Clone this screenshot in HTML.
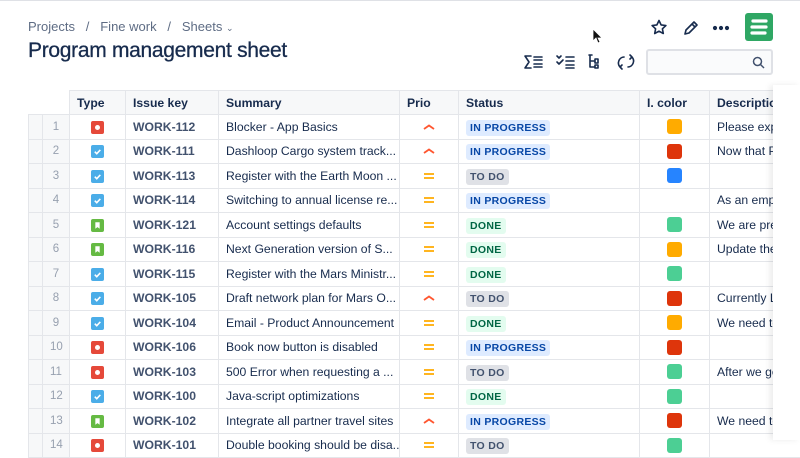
<!DOCTYPE html>
<html><head><meta charset="utf-8"><style>
*{box-sizing:border-box;margin:0;padding:0}
body{width:800px;height:440px;overflow:hidden;background:#fff;font-family:"Liberation Sans",sans-serif;color:#172b4d;position:relative}
.topline{position:absolute;left:0;top:0;width:800px;height:1px;background:#dfe1e6}
.bc{position:absolute;left:28px;top:19px;font-size:13px;color:#5e6c84}
.h1{position:absolute;left:28px;top:39px;font-size:21px;font-weight:400;color:#172b4d;letter-spacing:-0.3px;-webkit-text-stroke:0.3px #172b4d}
.tbl{position:absolute;left:28px;top:90px;border-collapse:collapse;font-size:12.2px;table-layout:fixed;width:781px}
.tbl td,.tbl th{border:1px solid #e4e6ea;height:24.5px;white-space:nowrap;overflow:hidden;padding:0 7px;text-align:left}
.tbl th{font-weight:bold;background:#f7f8f9;height:24px}
.tbl th.blank{border:none;background:#fff}
.n{color:#97a0af;text-align:center!important;font-size:11.5px}
.g{background:#f7f8f9}
.k{color:#42526e;font-weight:bold}
.c{text-align:center!important}
.ic{display:inline-block;width:13px;height:13px;border-radius:2px;vertical-align:middle;position:relative}
.ic svg{position:absolute;left:0;top:0}
.bug{background:#e5493a}.bug:after{content:"";position:absolute;left:4px;top:4px;width:5px;height:5px;border-radius:50%;background:#fff}
.task{background:#4bade8}
.story{background:#65ba43}
.lz{font-size:10.5px;font-weight:bold;padding:2px 4px;border-radius:3px;letter-spacing:.3px}
.ip{background:#deebff;color:#0747a6}.td{background:#dfe1e6;color:#42526e}.dn{background:#e3fcef;color:#006644}
.sw{display:inline-block;width:15px;height:15px;border-radius:3px;vertical-align:middle}
.shade{position:absolute;left:773px;top:85px;width:27px;height:355px;background:#fff;box-shadow:-3px 0 6px rgba(0,0,0,.08)}
.search{position:absolute;left:646px;top:49px;width:127px;height:26px;border:2px solid #dfe1e6;border-radius:3px;background:#fafbfc}
.logo{position:absolute;left:745px;top:13px;width:28px;height:28px;background:#2fa764;border-radius:3px}
</style></head><body>
<div class="topline"></div>
<div class="bc">Projects &nbsp;&nbsp;/&nbsp;&nbsp; Fine work &nbsp;&nbsp;/&nbsp;&nbsp; Sheets <span style="font-size:9px">&#8964;</span></div>
<div class="h1">Program management sheet</div>

<svg style="position:absolute;left:648px;top:18px" width="90" height="20" viewBox="0 0 90 20" fill="none" stroke="#172b4d" stroke-width="1.6" stroke-linejoin="round" stroke-linecap="round">
<path d="M11 2.5l2.1 4.4 4.8.6-3.5 3.3.9 4.7L11 13.2 6.7 15.5l.9-4.7L4.1 7.5l4.8-.6z"/>
<path d="M37 16l1-4 8-8 3 3-8 8z M44 6l3 3"/>
<circle cx="67" cy="10" r="1.3" fill="#172b4d"/><circle cx="73" cy="10" r="1.3" fill="#172b4d"/><circle cx="79" cy="10" r="1.3" fill="#172b4d"/>
</svg>
<div class="logo"><svg width="28" height="28" viewBox="0 0 28 28" fill="none" stroke="#fff" stroke-width="3.2" stroke-linecap="round"><path d="M8 8h13M7 14h14M7 20h13"/></svg></div>
<svg style="position:absolute;left:522px;top:53px" width="120" height="18" viewBox="0 0 120 18" fill="none" stroke="#172b4d" stroke-width="1.6" stroke-linecap="round" stroke-linejoin="round">
<path d="M9 3H3l4 6-4 6h6M12 4h8M12 7h8M12 11h8M12 14h8"/>
<path d="M35 3l2 2 2-2M35 9l2 2 4-4M44 4h8M44 8h8M44 12h8M44 15h8"/>
<path d="M67 2h3M68 2v12h4M68 8h4M73 6h3v4h-3zM73 12h3v3h-3z"/>
<path d="M102 4a6 6 0 0 0-4 10M100 16l-2-2 2-2M106 14a6 6 0 0 0 4-10M108 2l2 2-2 2"/>
</svg>
<div class="search"><svg style="position:absolute;right:6px;top:5px" width="13" height="13" viewBox="0 0 13 13" fill="none" stroke="#42526e" stroke-width="1.5"><circle cx="5.5" cy="5.5" r="4"/><path d="M8.5 8.5l3.5 3.5"/></svg></div>
<svg style="position:absolute;left:592px;top:28px" width="12" height="16" viewBox="0 0 12 16"><path d="M1 1v12l3-3 2 5 2-1-2-4h4z" fill="#111" stroke="#fff" stroke-width=".8"/></svg>

<table class="tbl">
<colgroup><col style="width:14px"><col style="width:27px"><col style="width:56px"><col style="width:93px"><col style="width:181px"><col style="width:59px"><col style="width:181px"><col style="width:70px"><col style="width:100px"></colgroup>
<tr><th class="blank"></th><th class="blank"></th><th>Type</th><th>Issue key</th><th>Summary</th><th>Prio</th><th>Status</th><th>I. color</th><th>Description</th></tr>
<tbody id="b"></tbody>
</table>
<div class="shade"></div>
<script>
var R=[["bug","112","Blocker - App Basics","h","ip","#ffab00","Please exp"],
["task","111","Dashloop Cargo system track...","h","ip","#de350b","Now that P"],
["task","113","Register with the Earth Moon ...","m","td","#2684ff",""],
["task","114","Switching to annual license re...","m","ip","","As an emp"],
["story","121","Account settings defaults","m","dn","#4ccf94","We are pre"],
["story","116","Next Generation version of S...","m","dn","#ffab00","Update the"],
["task","115","Register with the Mars Ministr...","m","dn","#4ccf94",""],
["task","105","Draft network plan for Mars O...","h","td","#de350b","Currently L"],
["task","104","Email - Product Announcement","m","dn","#ffab00","We need to"],
["bug","106","Book now button is disabled","m","ip","#de350b",""],
["bug","103","500 Error when requesting a ...","m","td","#4ccf94","After we ge"],
["task","100","Java-script optimizations","m","dn","#4ccf94",""],
["story","102","Integrate all partner travel sites","h","ip","#de350b","We need to"],
["bug","101","Double booking should be disa...","m","td","#4ccf94",""]];
var L={ip:"IN PROGRESS",td:"TO DO",dn:"DONE"};
var tk='<svg width="13" height="13" viewBox="0 0 12 12"><path d="M3.5 6.2l1.8 1.8 3.3-3.5" stroke="#fff" stroke-width="1.5" fill="none"/></svg>';
var st='<svg width="13" height="13" viewBox="0 0 12 12"><path d="M4 3h4v6l-2-1.5L4 9z" fill="#fff"/></svg>';
var h='<svg width="12" height="8" viewBox="0 0 12 8"><path d="M1 6l5-3.5 5 3.5" stroke="#ff5630" stroke-width="1.8" fill="none"/></svg>';
var m='<svg width="12" height="8" viewBox="0 0 12 8"><path d="M1 2h10M1 6h10" stroke="#ffab00" stroke-width="1.8"/></svg>';
var s="";R.forEach(function(r,i){s+='<tr><td class="g"></td><td class="n g">'+(i+1)+'</td><td class="c"><span class="ic '+r[0]+'">'+(r[0]=="task"?tk:r[0]=="story"?st:"")+'</span></td><td class="k">WORK-'+r[1]+'</td><td>'+r[2]+'</td><td class="c">'+(r[3]=="h"?h:m)+'</td><td><span class="lz '+r[4]+'">'+L[r[4]]+'</span></td><td class="c">'+(r[5]?'<span class="sw" style="background:'+r[5]+'"></span>':'')+'</td><td>'+r[6]+'</td></tr>'});
document.getElementById("b").innerHTML=s;
</script>
</body></html>
